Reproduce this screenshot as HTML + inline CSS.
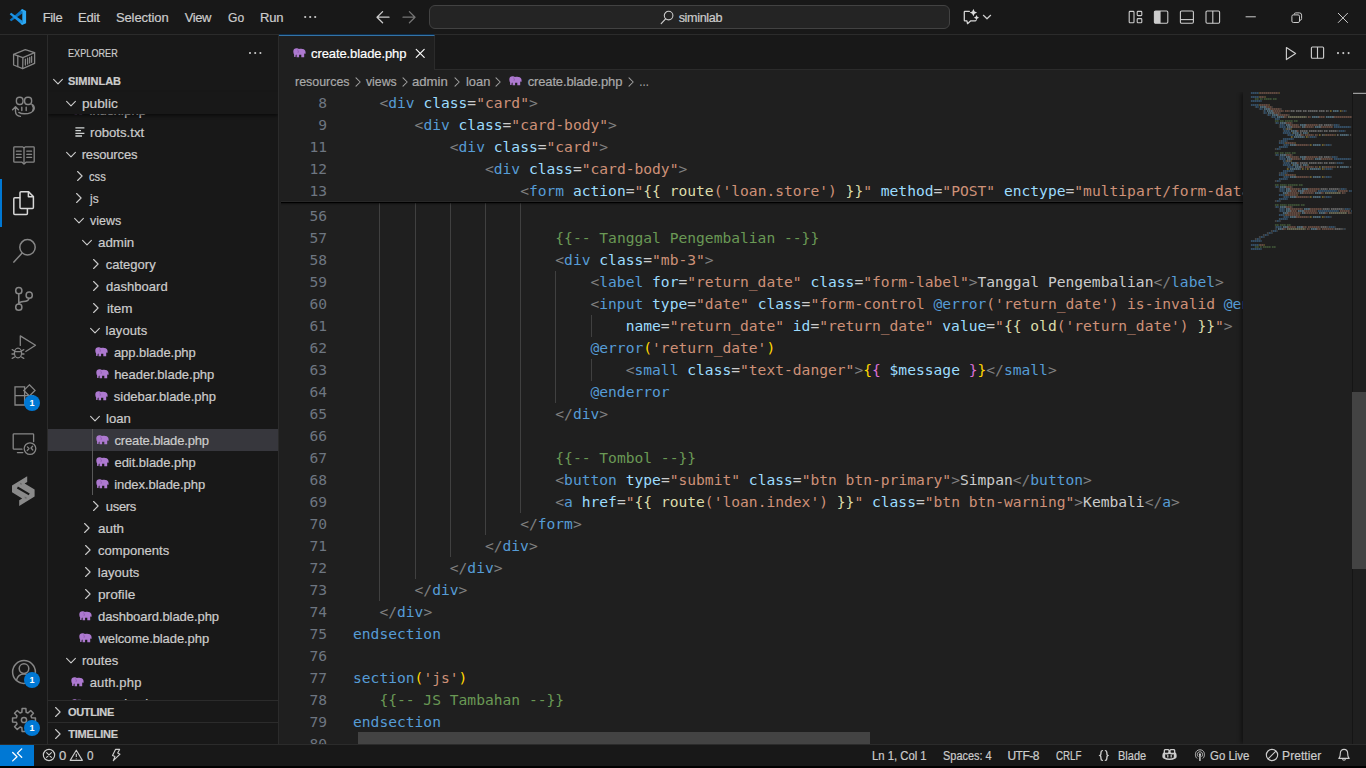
<!DOCTYPE html>
<html lang="en"><head><meta charset="utf-8"><title>create.blade.php - siminlab - Visual Studio Code</title>
<style>

*{box-sizing:border-box;margin:0;padding:0}
html,body{width:1366px;height:768px;overflow:hidden;background:#000}
body{font-family:"Liberation Sans",sans-serif;font-size:13px;color:#ccc;-webkit-text-stroke:.2px currentColor}
#app{position:relative;width:1366px;height:768px;overflow:hidden;background:#181818}
.abs{position:absolute}
.fit{transform-origin:0 50%;white-space:nowrap}
svg{display:block}
/* title bar */
#title{position:absolute;left:0;top:0;width:1366px;height:35px;background:#181818;border-bottom:1px solid #2b2b2b}
#title .menu{position:absolute;top:1px;height:34px;line-height:34px;font-size:13px;color:#ccc;white-space:nowrap}
#cc{position:absolute;left:429px;top:5px;width:521px;height:24px;border:1px solid #424242;border-radius:6px;background:#242424}
#cc span{position:absolute;left:249px;top:1.2px;line-height:22px;font-size:12.6px;color:#ccc}
/* activity */
#act{position:absolute;left:0;top:35px;width:48px;height:709px;background:#181818;border-right:1px solid #2b2b2b}
#act .ico{position:absolute;left:12px;width:24px;height:24px}
#act .bar{position:absolute;left:0;top:144px;width:2px;height:48px;background:#0078d4}
.badge{-webkit-text-stroke:0;position:absolute;width:16px;height:16px;border-radius:8px;background:#0078d4;color:#fff;font-size:9px;font-weight:bold;line-height:16px;text-align:center}
/* sidebar */
#side{position:absolute;left:48px;top:35px;width:231px;height:709px;background:#181818;border-right:1px solid #2b2b2b;overflow:hidden}
#side .hdr{position:absolute;left:20px;top:1px;line-height:35px;font-size:11px;color:#ccc;letter-spacing:.1px}
.row{position:absolute;left:0;width:230px;height:22px;line-height:22px;white-space:nowrap;color:#ccc;font-size:13px}
.row .lbl{position:absolute;top:1px}
.row svg{position:absolute}
.row.sel{background:#37373d}
.sec{position:absolute;left:0;width:230px;height:22px;line-height:22px;font-size:11px;font-weight:bold;color:#ccc}
.sec span{position:absolute;left:20px;top:0}
/* tabs */
#tabs{position:absolute;left:279px;top:35px;width:1087px;height:35px;background:#181818;border-bottom:1px solid #2b2b2b}
#tab{position:absolute;left:0;top:0;width:156px;height:35px;background:#1f1f1f;border-top:1px solid #3473a6;border-right:1px solid #2b2b2b}
#tab span{position:absolute;left:32px;top:1px;line-height:34px;font-size:13px;color:#fff}
#bc{position:absolute;left:279px;top:70px;width:1087px;height:22px;background:#1f1f1f;font-size:13px;color:#a9a9a9;line-height:22px;white-space:nowrap}
#bc span{position:absolute;top:1px}
/* editor */
#ed{position:absolute;left:279px;top:92px;width:1087px;height:652px;background:#1f1f1f;overflow:hidden}
.ln{position:absolute;left:0;width:48px;text-align:right;color:#6e7681;height:22px}
.mono{-webkit-text-stroke:0;font-family:"DejaVu Sans Mono",monospace;font-size:14.62px;line-height:22px;white-space:pre}
#codeclip{position:absolute;left:74px;top:0;width:890px;height:652px;overflow:hidden}
.cl{position:absolute;left:-8.8px;height:22px;color:#ccc}
.g{position:absolute;width:1px;background:#404040}
#sticky{position:absolute;left:0;top:0;width:964px;height:110px;background:#1f1f1f;overflow:hidden}
#stsh{position:absolute;left:2px;top:110px;width:962px;height:4px;background:linear-gradient(#000 0,#000 1px,rgba(0,0,0,.5) 1px,rgba(0,0,0,.22) 2px,rgba(0,0,0,.07) 3px,rgba(0,0,0,0) 4px)}
#stbd{position:absolute;left:2px;top:109px;width:962px;height:1px;background:#282828}
.t{color:#808080}.n{color:#569cd6}.a{color:#9cdcfe}.s{color:#ce9178}.c{color:#6a9955}.f{color:#dcdcaa}.y{color:#ffd700}.p{color:#da70d6}.w{color:#ccc}
/* status */
#status{position:absolute;left:0;top:744px;width:1366px;height:22px;background:#181818;border-top:1px solid #2b2b2b;font-size:12px;color:#ccc}
#status span{position:absolute;top:1px;line-height:21px;white-space:nowrap}
#remote{position:absolute;left:0;top:0;width:34px;height:21px;background:#0078d4}

</style></head>
<body>
<div id="app">
<div id="title"><svg class="abs" style="left:8px;top:7px" width="20" height="20" viewBox="8 7 20 20"><path fill="#0a74c2" d="M9.7 19.7 L22.3 9 V13.4 L11.2 21.3 Z"/><path fill="#1c94e6" d="M11.2 12.7 L22.3 20.7 V25.1 L9.7 14.3 Z"/><path fill="#2ba8f4" d="M22.1 9 L26.1 10.9 V23.2 L22.1 25.1 L20.6 23.6 L22.3 22.4 V11.6 L20.6 10.5 Z"/></svg><span class="menu fit" id="f0" style="left:42.64px;letter-spacing:-0.296px;">File</span><span class="menu fit" id="f1" style="left:78.04px;letter-spacing:-0.210px;">Edit</span><span class="menu fit" id="f2" style="left:115.93px;letter-spacing:-0.099px;">Selection</span><span class="menu fit" id="f3" style="left:184.71px;letter-spacing:-0.379px;">View</span><span class="menu fit" id="f4" style="left:228.22px;transform:scaleX(0.9281);">Go</span><span class="menu fit" id="f5" style="left:260.06px;letter-spacing:-0.263px;">Run</span><svg class="abs" style="left:303px;top:14px" width="15" height="6" viewBox="0 0 15 6" fill="none" ><circle cx="2.2" cy="3" r="1.1" fill="#ccc"/><circle cx="7.2" cy="3" r="1.1" fill="#ccc"/><circle cx="12.2" cy="3" r="1.1" fill="#ccc"/></svg><svg class="abs" style="left:375px;top:10px" width="16" height="14" viewBox="0 0 16 14" fill="none" ><path d="M7.6 1.6 L2 7.2 L7.6 12.8 M2.2 7.2 H14" stroke="#ccc" stroke-width="1.25" stroke-linecap="round" stroke-linejoin="round"/></svg><svg class="abs" style="left:400.5px;top:10px" width="16" height="14" viewBox="0 0 16 14" fill="none" ><path d="M8.4 1.6 L14 7.2 L8.4 12.8 M13.8 7.2 H2" stroke="#757575" stroke-width="1.25" stroke-linecap="round" stroke-linejoin="round"/></svg><div id="cc"><svg class="abs" style="left:230px;top:4px" width="14" height="15" viewBox="0 0 14 15" fill="none" ><circle cx="8.6" cy="5.6" r="4.3" stroke="#ccc" stroke-width="1.1"/><path d="M5.6 8.8 L1.2 13.6" stroke="#ccc" stroke-width="1.2" stroke-linecap="round"/></svg><span class="fit" id="f6" style="left:248.63px;letter-spacing:-0.331px;">siminlab</span></div><svg class="abs" style="left:963px;top:9px" width="18" height="17" viewBox="0 0 18 17" fill="none" ><path d="M6.4 2.3 H1.9 Q1.3 2.3 1.3 2.9 V11.2 Q1.3 11.8 1.9 11.8 H3.9 L4.5 14.7 L7.8 11.8 H12.4 Q13 11.8 13 11.3" stroke="#d6d6d6" stroke-width="1.25" stroke-linejoin="round" stroke-linecap="round"/><path fill="#dcdcdc" d="M10.4 -.1 L11.6 2.4 L14.1 3.6 L11.6 4.8 L10.4 7.3 L9.2 4.8 L6.7 3.6 L9.2 2.4 Z"/><path fill="#dcdcdc" d="M13.5 6.1 L14.4 7.8 L16.1 8.7 L14.4 9.6 L13.5 11.3 L12.6 9.6 L10.9 8.7 L12.6 7.8 Z"/></svg><svg class="abs" style="left:982px;top:13px" width="11" height="8" viewBox="0 0 11 8" fill="none" ><path d="M1.4 2.3 L5 5.8 L8.6 2.3" stroke="#d0d0d0" stroke-width="1.2" stroke-linecap="round" stroke-linejoin="round"/></svg><svg class="abs" style="left:1127px;top:9px" width="18" height="16" viewBox="0 0 18 16" fill="none" ><rect stroke="#ccc" stroke-width="1.1" stroke-linejoin="round" x="2.2" y="2.4" width="4.8" height="11.4" rx=".8"/><rect stroke="#ccc" stroke-width="1.1" stroke-linejoin="round" x="10.2" y="2.4" width="4.6" height="4.2" rx=".8"/><rect stroke="#ccc" stroke-width="1.1" stroke-linejoin="round" x="10.2" y="9.6" width="4.6" height="4.2" rx=".8"/></svg><svg class="abs" style="left:1152px;top:9px" width="18" height="16" viewBox="0 0 18 16" fill="none" ><rect stroke="#ccc" stroke-width="1.1" stroke-linejoin="round" x="2.4" y="2" width="13.4" height="12.2" rx="1.2"/><path d="M2.4 3 Q2.4 2 3.4 2 H8.6 V14.2 H3.4 Q2.4 14.2 2.4 13.2 Z" fill="#ccc"/></svg><svg class="abs" style="left:1178px;top:9px" width="18" height="16" viewBox="0 0 18 16" fill="none" ><rect stroke="#ccc" stroke-width="1.1" stroke-linejoin="round" x="2.4" y="2" width="13" height="12.2" rx="1.2"/><path stroke="#ccc" stroke-width="1.1" stroke-linejoin="round" d="M2.4 10.6 H15.4"/></svg><svg class="abs" style="left:1203px;top:9px" width="19" height="16" viewBox="0 0 19 16" fill="none" ><rect stroke="#ccc" stroke-width="1.1" stroke-linejoin="round" x="3" y="2" width="13.6" height="12.2" rx="1.2"/><path stroke="#ccc" stroke-width="1.1" stroke-linejoin="round" d="M9.8 2 V14.2"/></svg><svg class="abs" style="left:1245px;top:16px" width="12" height="2" viewBox="0 0 12 2" fill="none" ><path d="M0.6 0.8 H10.8" stroke="#ccc" stroke-width="1"/></svg><svg class="abs" style="left:1291px;top:11.5px" width="12" height="12" viewBox="0 0 12 12" fill="none" ><rect x="0.9" y="2.9" width="7.6" height="7.6" rx="1.4" stroke="#ccc" stroke-width="1"/><path d="M3 2.6 Q3.2 0.9 4.8 0.9 H8.4 Q10.6 0.9 10.6 3.1 V6.6 Q10.6 8.2 8.9 8.4" stroke="#ccc" stroke-width="1"/></svg><svg class="abs" style="left:1337px;top:11.5px" width="12" height="12" viewBox="0 0 12 12" fill="none" ><path d="M1 1 L10.8 10.8 M10.8 1 L1 10.8" stroke="#ccc" stroke-width="1"/></svg></div>
<div id="act"></div><div class="abs" style="left:0;top:179px;width:2px;height:48px;background:#0078d4"></div><svg class="abs" style="left:6px;top:42px" width="36" height="36" viewBox="0 0 36 36" fill="none" ><path stroke="#868686" stroke-width="1.3" stroke-linejoin="round" stroke-linecap="round" d="M7.6 12.3 L19.3 7.6 L28.6 10.6 L16.9 15.6 Z"/><path stroke="#868686" stroke-width="1.3" stroke-linejoin="round" stroke-linecap="round" d="M7.6 12.3 V23 L16.7 26.6 L28.6 21.4 V10.6"/><path stroke="#868686" stroke-width="1.3" stroke-linejoin="round" stroke-linecap="round" d="M16.9 15.6 L16.7 26.6"/><path stroke="#868686" stroke-width="1.3" stroke-linejoin="round" stroke-linecap="round" d="M11.8 14 V24.5"/><path stroke="#868686" stroke-width="1.3" stroke-linejoin="round" stroke-linecap="round" stroke-width="1.1" d="M19.4 17.2 V23 M21.6 16.2 V22 M23.7 15.3 V21.1 M25.6 14.4 V20.3"/></svg><svg class="abs" style="left:6px;top:86px" width="36" height="36" viewBox="0 0 36 36" fill="none" ><rect stroke="#868686" stroke-width="1.4" stroke-linejoin="round" stroke-linecap="round" stroke-width="1.8" x="10.4" y="11.3" width="6.6" height="7.2" rx="3"/><rect stroke="#868686" stroke-width="1.4" stroke-linejoin="round" stroke-linecap="round" stroke-width="1.8" x="18.6" y="11.3" width="7" height="7.2" rx="3"/><path stroke="#868686" stroke-width="1.4" stroke-linejoin="round" stroke-linecap="round" stroke-width="1.5" d="M25.8 18.4 C27.6 19 28.4 21 28.2 23 C27.8 26 23 27.8 18.5 27.8 C16 27.8 14 27.2 12.8 26.4"/><path stroke="#868686" stroke-width="1.4" stroke-linejoin="round" stroke-linecap="round" stroke-width="1.6" d="M26.4 19.6 C27.6 21 27.6 23.4 26.6 24.8"/><path stroke="#868686" stroke-width="1.4" stroke-linejoin="round" stroke-linecap="round" stroke-width="1.9" stroke-linecap="butt" d="M15.8 21.2 V24.6 M20.2 21.2 V24.6"/><path stroke="#868686" stroke-width="1.4" stroke-linejoin="round" stroke-linecap="round" d="M6.6 23.8 L9.5 20.8 L12.4 23.8 M9.5 21 V25.5 C9.6 28 11.5 30 14.4 30.4"/></svg><svg class="abs" style="left:6px;top:137px" width="36" height="36" viewBox="0 0 36 36" fill="none" ><path stroke="#868686" stroke-width="1.3" stroke-linejoin="round" stroke-linecap="round" d="M16.4 9.8 H8.6 Q7.8 9.8 7.8 10.6 V24.4 Q7.8 25.2 8.6 25.2 H16 L18 27 L20 25.2 H27.4 Q28.2 25.2 28.2 24.4 V10.6 Q28.2 9.8 27.4 9.8 H19.6 L18 10.8 Z"/><path stroke="#868686" stroke-width="1.3" stroke-linejoin="round" stroke-linecap="round" d="M18 10.8 V26.6"/><path stroke="#868686" stroke-width="1.3" stroke-linejoin="round" stroke-linecap="round" stroke-width="1.2" d="M10.4 14.2 H15.2 M10.4 17.3 H15.2 M10.4 20.4 H15.2 M20.8 14.2 H25.6 M20.8 17.3 H25.6 M20.8 20.4 H25.6"/></svg><svg class="abs" style="left:0px;top:178px" width="48" height="48" viewBox="0 0 48 48" fill="none" ><path stroke="#d7d7d7" stroke-width="1.5" stroke-linejoin="round" stroke-linecap="round" d="M21 13.8 H28.6 L33.4 18.6 V29.4 Q33.4 30.4 32.4 30.4 H21 Q20 30.4 20 29.4 V14.8 Q20 13.8 21 13.8 Z"/><path stroke="#d7d7d7" stroke-width="1.5" stroke-linejoin="round" stroke-linecap="round" stroke-width="1.2" d="M28.4 14 V18.8 H33.2"/><path stroke="#d7d7d7" stroke-width="1.5" stroke-linejoin="round" stroke-linecap="round" d="M19.6 19.8 H14.8 Q13.8 19.8 13.8 20.8 V35.4 Q13.8 36.4 14.8 36.4 H26.4 Q27.4 36.4 27.4 35.4 V30.8"/></svg><svg class="abs" style="left:0px;top:226px" width="48" height="48" viewBox="0 0 48 48" fill="none" ><circle stroke="#868686" stroke-width="1.5" stroke-linecap="round" cx="27.5" cy="21.3" r="7.7"/><path stroke="#868686" stroke-width="1.5" stroke-linecap="round" d="M21.9 27.3 L13.9 36.1"/></svg><svg class="abs" style="left:0px;top:274px" width="48" height="48" viewBox="0 0 48 48" fill="none" ><circle stroke="#868686" stroke-width="1.5" stroke-linecap="round" cx="18.8" cy="16.7" r="3.1"/><circle stroke="#868686" stroke-width="1.5" stroke-linecap="round" cx="18.8" cy="33.2" r="3.1"/><circle stroke="#868686" stroke-width="1.5" stroke-linecap="round" cx="29.2" cy="21.2" r="3.1"/><path stroke="#868686" stroke-width="1.5" stroke-linecap="round" d="M18.8 19.9 V30 M29 24.4 C28.6 27 26 27.4 23.5 27.4 C21 27.4 19.4 28.2 18.9 29.6"/></svg><svg class="abs" style="left:0px;top:322px" width="48" height="48" viewBox="0 0 48 48" fill="none" ><path stroke="#868686" stroke-width="1.3" stroke-linecap="round" stroke-linejoin="round" d="M20.3 23.4 V13.9 L35.5 23.2 L25.8 29.5"/><ellipse stroke="#868686" stroke-width="1.3" stroke-linecap="round" stroke-linejoin="round" cx="18" cy="31" rx="3.6" ry="4.9"/><path stroke="#868686" stroke-width="1.3" stroke-linecap="round" stroke-linejoin="round" d="M14.6 29.6 H21.4 M12.2 27.6 L14.6 29 M12 32 H14.4 M12.2 36.4 L14.6 35 M23.8 27.6 L21.4 29 M24 32 H21.6 M23.8 36.4 L21.4 35"/></svg><svg class="abs" style="left:0px;top:370px" width="48" height="48" viewBox="0 0 48 48" fill="none" ><path stroke="#868686" stroke-width="1.3" stroke-linejoin="miter" d="M15 16.8 H24.6 V35 H15 Z M15 25.6 H24.6 M24.6 25.6 H33.4 V35 H24.6"/><path stroke="#868686" stroke-width="1.3" stroke-linejoin="miter" d="M29.4 14.8 L35 20.4 L29.4 26 L23.8 20.4 Z"/></svg><svg class="abs" style="left:0px;top:418px" width="48" height="48" viewBox="0 0 48 48" fill="none" ><path stroke="#868686" stroke-width="1.3" stroke-linejoin="round" stroke-linecap="round" d="M33.6 23.6 V16.6 Q33.6 15.8 32.8 15.8 H14 Q13.2 15.8 13.2 16.6 V30.4 Q13.2 31.2 14 31.2 H22"/><path stroke="#868686" stroke-width="1.3" stroke-linejoin="round" stroke-linecap="round" d="M17.4 34.6 H22.8"/><circle stroke="#868686" stroke-width="1.3" stroke-linejoin="round" stroke-linecap="round" cx="30" cy="30.6" r="5.8"/><path stroke="#868686" stroke-width="1.3" stroke-linejoin="round" stroke-linecap="round" stroke-width="1" d="M27.4 28.9 L29 30.5 L27.2 32.6 M32.6 28.3 L31 30 L32.8 32"/></svg><svg class="abs" style="left:0px;top:466px" width="48" height="48" viewBox="0 0 48 48" fill="none" ><path fill="#8a8a8a" d="M27.2 10.2 V16 L24.6 17.6 L34.6 23.6 V30.6 L19.2 39.9 V34.2 L22.2 32.4 L12 26.2 V19.4 Z"/><path stroke="#181818" stroke-width="2.1" d="M17.4 21.5 L29.2 28.3"/><path fill="#6c6c6c" d="M20 16.8 L21.9 17.4 L21.9 18.8 L20 18.2 Z M24.7 30.6 L26.6 31.2 L26.6 32.8 L24.7 32.2 Z"/></svg><svg class="abs" style="left:0px;top:648px" width="48" height="48" viewBox="0 0 48 48" fill="none" ><circle stroke="#868686" stroke-width="1.5" stroke-linecap="round" cx="24" cy="24" r="11.4"/><circle stroke="#868686" stroke-width="1.5" stroke-linecap="round" cx="24" cy="20.6" r="4.8"/><path stroke="#868686" stroke-width="1.5" stroke-linecap="round" d="M16.4 32.4 C17.4 28.4 20.4 26 24 26 C27.6 26 30.6 28.4 31.6 32.4"/></svg><svg class="abs" style="left:0px;top:696px" width="48" height="48" viewBox="0 0 48 48" fill="none" ><path stroke="#868686" stroke-width="1.5" stroke-linejoin="round" d="M21.87 16.29 L22.09 12.56 L25.91 12.56 L26.13 16.29 L27.94 17.04 L30.74 14.56 L33.44 17.26 L30.96 20.06 L31.71 21.87 L35.44 22.09 L35.44 25.91 L31.71 26.13 L30.96 27.94 L33.44 30.74 L30.74 33.44 L27.94 30.96 L26.13 31.71 L25.91 35.44 L22.09 35.44 L21.87 31.71 L20.06 30.96 L17.26 33.44 L14.56 30.74 L17.04 27.94 L16.29 26.13 L12.56 25.91 L12.56 22.09 L16.29 21.87 L17.04 20.06 L14.56 17.26 L17.26 14.56 L20.06 17.04 Z"/><circle stroke="#868686" stroke-width="1.5" stroke-linejoin="round" cx="24" cy="24" r="2.6"/></svg><div class="badge" style="left:24px;top:395px">1</div><div class="badge" style="left:24px;top:672px">1</div><div class="badge" style="left:24px;top:720px">1</div>
<div id="side"><span class="hdr fit" id="f7" style="left:20.15px;transform:scaleX(0.8207);">EXPLORER</span><svg class="abs" style="left:200px;top:15px" width="15" height="6" viewBox="0 0 15 6" fill="none" ><circle cx="2" cy="3" r="1.05" fill="#ccc"/><circle cx="7.2" cy="3" r="1.05" fill="#ccc"/><circle cx="12.4" cy="3" r="1.05" fill="#ccc"/></svg><div class="abs" style="left:0;top:79px;width:230px;height:586px;overflow:hidden"><div class="row" style="top:-15px"><svg class="abs" style="left:23.199999999999996px;top:6.4px" width="14" height="10" viewBox="0 0 14 10"><path fill="#ad79d0" d="M0.3 3.4 C0.3 1.4 1.6 0.2 3.4 0.2 C4.6 0.2 5.4 0.6 6 1 C7.4 0.5 9.4 0.5 10.8 1.2 C12.2 2 12.7 3.4 12.6 4.8 L12.6 5.9 L11.8 5.2 L11.2 6.2 V9.3 H8.3 V6.7 H6.1 V9.3 H3.6 V7 L3.1 6.6 L2.6 7.4 V8.4 C2.6 9.3 1.2 9.3 1.1 8.4 V6.4 C0.6 5.6 0.3 4.6 0.3 3.4 Z"/><path d="M4.4 1.8 C5.4 2.4 5.6 3.6 5 4.8" stroke="#8650a8" stroke-width=".7" fill="none"/></svg><span class="lbl fit" id="f8" style="left:41.50px;">index.php</span></div><div class="row" style="top:7px"><svg class="abs" style="left:27.399999999999995px;top:5.2px" width="11" height="11" viewBox="0 0 11 11" fill="none" ><path d="M0.4 1.9 H9.4 M0.4 4.6 H6 M0.4 7.3 H9.4 M0.4 10 H7" stroke="#d0d4d4" stroke-width="1.3"/></svg><span class="lbl fit" id="f9" style="left:42.41px;transform:scaleX(1.0128);">robots.txt</span></div><div class="row" style="top:29px"><svg class="abs" style="left:17.1px;top:7.9px" width="12" height="8" viewBox="0 0 12 8" fill="none" ><path d="M1.6 1.4 L6 5.9 L10.4 1.4" stroke="#ccc" stroke-width="1.1" stroke-linecap="round" stroke-linejoin="round"/></svg><span class="lbl fit" id="f10" style="left:33.65px;letter-spacing:-0.158px;">resources</span></div><div class="row" style="top:51px"><svg class="abs" style="left:27.499999999999993px;top:5.1px" width="8" height="12" viewBox="0 0 8 12" fill="none" ><path d="M1.6 1.5 L6.1 6 L1.6 10.5" stroke="#ccc" stroke-width="1.1" stroke-linecap="round" stroke-linejoin="round"/></svg><span class="lbl fit" id="f11" style="left:41.44px;transform:scaleX(0.8638);">css</span></div><div class="row" style="top:73px"><svg class="abs" style="left:26.999999999999993px;top:5.1px" width="8" height="12" viewBox="0 0 8 12" fill="none" ><path d="M1.6 1.5 L6.1 6 L1.6 10.5" stroke="#ccc" stroke-width="1.1" stroke-linecap="round" stroke-linejoin="round"/></svg><span class="lbl fit" id="f12" style="left:41.91px;transform:scaleX(0.9143);">js</span></div><div class="row" style="top:95px"><svg class="abs" style="left:24.999999999999993px;top:7.9px" width="12" height="8" viewBox="0 0 12 8" fill="none" ><path d="M1.6 1.4 L6 5.9 L10.4 1.4" stroke="#ccc" stroke-width="1.1" stroke-linecap="round" stroke-linejoin="round"/></svg><span class="lbl fit" id="f13" style="left:41.64px;transform:scaleX(0.9584);">views</span></div><div class="row" style="top:117px"><svg class="abs" style="left:32.800000000000004px;top:7.9px" width="12" height="8" viewBox="0 0 12 8" fill="none" ><path d="M1.6 1.4 L6 5.9 L10.4 1.4" stroke="#ccc" stroke-width="1.1" stroke-linecap="round" stroke-linejoin="round"/></svg><span class="lbl fit" id="f14" style="left:49.86px;transform:scaleX(1.0244);">admin</span></div><div class="row" style="top:139px"><svg class="abs" style="left:43.49999999999999px;top:5.1px" width="8" height="12" viewBox="0 0 8 12" fill="none" ><path d="M1.6 1.5 L6.1 6 L1.6 10.5" stroke="#ccc" stroke-width="1.1" stroke-linecap="round" stroke-linejoin="round"/></svg><span class="lbl fit" id="f15" style="left:57.70px;letter-spacing:0.023px;">category</span></div><div class="row" style="top:161px"><svg class="abs" style="left:43.49999999999999px;top:5.1px" width="8" height="12" viewBox="0 0 8 12" fill="none" ><path d="M1.6 1.5 L6.1 6 L1.6 10.5" stroke="#ccc" stroke-width="1.1" stroke-linecap="round" stroke-linejoin="round"/></svg><span class="lbl fit" id="f16" style="left:57.89px;letter-spacing:0.043px;">dashboard</span></div><div class="row" style="top:183px"><svg class="abs" style="left:43.9px;top:5.1px" width="8" height="12" viewBox="0 0 8 12" fill="none" ><path d="M1.6 1.5 L6.1 6 L1.6 10.5" stroke="#ccc" stroke-width="1.1" stroke-linecap="round" stroke-linejoin="round"/></svg><span class="lbl fit" id="f17" style="left:58.64px;transform:scaleX(1.0360);">item</span></div><div class="row" style="top:205px"><svg class="abs" style="left:40.99999999999999px;top:7.9px" width="12" height="8" viewBox="0 0 12 8" fill="none" ><path d="M1.6 1.4 L6 5.9 L10.4 1.4" stroke="#ccc" stroke-width="1.1" stroke-linecap="round" stroke-linejoin="round"/></svg><span class="lbl fit" id="f18" style="left:57.53px;letter-spacing:0.085px;">layouts</span></div><div class="row" style="top:227px"><svg class="abs" style="left:47.300000000000004px;top:6.4px" width="14" height="10" viewBox="0 0 14 10"><path fill="#ad79d0" d="M0.3 3.4 C0.3 1.4 1.6 0.2 3.4 0.2 C4.6 0.2 5.4 0.6 6 1 C7.4 0.5 9.4 0.5 10.8 1.2 C12.2 2 12.7 3.4 12.6 4.8 L12.6 5.9 L11.8 5.2 L11.2 6.2 V9.3 H8.3 V6.7 H6.1 V9.3 H3.6 V7 L3.1 6.6 L2.6 7.4 V8.4 C2.6 9.3 1.2 9.3 1.1 8.4 V6.4 C0.6 5.6 0.3 4.6 0.3 3.4 Z"/><path d="M4.4 1.8 C5.4 2.4 5.6 3.6 5 4.8" stroke="#8650a8" stroke-width=".7" fill="none"/></svg><span class="lbl fit" id="f19" style="left:65.93px;letter-spacing:-0.050px;">app.blade.php</span></div><div class="row" style="top:249px"><svg class="abs" style="left:47.50000000000001px;top:6.4px" width="14" height="10" viewBox="0 0 14 10"><path fill="#ad79d0" d="M0.3 3.4 C0.3 1.4 1.6 0.2 3.4 0.2 C4.6 0.2 5.4 0.6 6 1 C7.4 0.5 9.4 0.5 10.8 1.2 C12.2 2 12.7 3.4 12.6 4.8 L12.6 5.9 L11.8 5.2 L11.2 6.2 V9.3 H8.3 V6.7 H6.1 V9.3 H3.6 V7 L3.1 6.6 L2.6 7.4 V8.4 C2.6 9.3 1.2 9.3 1.1 8.4 V6.4 C0.6 5.6 0.3 4.6 0.3 3.4 Z"/><path d="M4.4 1.8 C5.4 2.4 5.6 3.6 5 4.8" stroke="#8650a8" stroke-width=".7" fill="none"/></svg><span class="lbl fit" id="f20" style="left:66.14px;letter-spacing:-0.021px;">header.blade.php</span></div><div class="row" style="top:271px"><svg class="abs" style="left:47.199999999999996px;top:6.4px" width="14" height="10" viewBox="0 0 14 10"><path fill="#ad79d0" d="M0.3 3.4 C0.3 1.4 1.6 0.2 3.4 0.2 C4.6 0.2 5.4 0.6 6 1 C7.4 0.5 9.4 0.5 10.8 1.2 C12.2 2 12.7 3.4 12.6 4.8 L12.6 5.9 L11.8 5.2 L11.2 6.2 V9.3 H8.3 V6.7 H6.1 V9.3 H3.6 V7 L3.1 6.6 L2.6 7.4 V8.4 C2.6 9.3 1.2 9.3 1.1 8.4 V6.4 C0.6 5.6 0.3 4.6 0.3 3.4 Z"/><path d="M4.4 1.8 C5.4 2.4 5.6 3.6 5 4.8" stroke="#8650a8" stroke-width=".7" fill="none"/></svg><span class="lbl fit" id="f21" style="left:65.81px;letter-spacing:-0.030px;">sidebar.blade.php</span></div><div class="row" style="top:293px"><svg class="abs" style="left:40.99999999999999px;top:7.9px" width="12" height="8" viewBox="0 0 12 8" fill="none" ><path d="M1.6 1.4 L6 5.9 L10.4 1.4" stroke="#ccc" stroke-width="1.1" stroke-linecap="round" stroke-linejoin="round"/></svg><span class="lbl fit" id="f22" style="left:57.66px;transform:scaleX(1.0091);">loan</span></div><div class="row sel" style="top:315px"><svg class="abs" style="left:47.50000000000001px;top:6.4px" width="14" height="10" viewBox="0 0 14 10"><path fill="#ad79d0" d="M0.3 3.4 C0.3 1.4 1.6 0.2 3.4 0.2 C4.6 0.2 5.4 0.6 6 1 C7.4 0.5 9.4 0.5 10.8 1.2 C12.2 2 12.7 3.4 12.6 4.8 L12.6 5.9 L11.8 5.2 L11.2 6.2 V9.3 H8.3 V6.7 H6.1 V9.3 H3.6 V7 L3.1 6.6 L2.6 7.4 V8.4 C2.6 9.3 1.2 9.3 1.1 8.4 V6.4 C0.6 5.6 0.3 4.6 0.3 3.4 Z"/><path d="M4.4 1.8 C5.4 2.4 5.6 3.6 5 4.8" stroke="#8650a8" stroke-width=".7" fill="none"/></svg><span class="lbl fit" id="f23" style="left:66.48px;letter-spacing:-0.150px;">create.blade.php</span></div><div class="row" style="top:337px"><svg class="abs" style="left:47.50000000000001px;top:6.4px" width="14" height="10" viewBox="0 0 14 10"><path fill="#ad79d0" d="M0.3 3.4 C0.3 1.4 1.6 0.2 3.4 0.2 C4.6 0.2 5.4 0.6 6 1 C7.4 0.5 9.4 0.5 10.8 1.2 C12.2 2 12.7 3.4 12.6 4.8 L12.6 5.9 L11.8 5.2 L11.2 6.2 V9.3 H8.3 V6.7 H6.1 V9.3 H3.6 V7 L3.1 6.6 L2.6 7.4 V8.4 C2.6 9.3 1.2 9.3 1.1 8.4 V6.4 C0.6 5.6 0.3 4.6 0.3 3.4 Z"/><path d="M4.4 1.8 C5.4 2.4 5.6 3.6 5 4.8" stroke="#8650a8" stroke-width=".7" fill="none"/></svg><span class="lbl fit" id="f24" style="left:66.46px;letter-spacing:-0.032px;">edit.blade.php</span></div><div class="row" style="top:359px"><svg class="abs" style="left:47.50000000000001px;top:6.4px" width="14" height="10" viewBox="0 0 14 10"><path fill="#ad79d0" d="M0.3 3.4 C0.3 1.4 1.6 0.2 3.4 0.2 C4.6 0.2 5.4 0.6 6 1 C7.4 0.5 9.4 0.5 10.8 1.2 C12.2 2 12.7 3.4 12.6 4.8 L12.6 5.9 L11.8 5.2 L11.2 6.2 V9.3 H8.3 V6.7 H6.1 V9.3 H3.6 V7 L3.1 6.6 L2.6 7.4 V8.4 C2.6 9.3 1.2 9.3 1.1 8.4 V6.4 C0.6 5.6 0.3 4.6 0.3 3.4 Z"/><path d="M4.4 1.8 C5.4 2.4 5.6 3.6 5 4.8" stroke="#8650a8" stroke-width=".7" fill="none"/></svg><span class="lbl fit" id="f25" style="left:66.21px;letter-spacing:-0.064px;">index.blade.php</span></div><div class="row" style="top:381px"><svg class="abs" style="left:43.9px;top:5.1px" width="8" height="12" viewBox="0 0 8 12" fill="none" ><path d="M1.6 1.5 L6.1 6 L1.6 10.5" stroke="#ccc" stroke-width="1.1" stroke-linecap="round" stroke-linejoin="round"/></svg><span class="lbl fit" id="f26" style="left:57.87px;letter-spacing:-0.351px;">users</span></div><div class="row" style="top:403px"><svg class="abs" style="left:35.300000000000004px;top:5.1px" width="8" height="12" viewBox="0 0 8 12" fill="none" ><path d="M1.6 1.5 L6.1 6 L1.6 10.5" stroke="#ccc" stroke-width="1.1" stroke-linecap="round" stroke-linejoin="round"/></svg><span class="lbl fit" id="f27" style="left:49.84px;transform:scaleX(1.0299);">auth</span></div><div class="row" style="top:425px"><svg class="abs" style="left:35.6px;top:5.1px" width="8" height="12" viewBox="0 0 8 12" fill="none" ><path d="M1.6 1.5 L6.1 6 L1.6 10.5" stroke="#ccc" stroke-width="1.1" stroke-linecap="round" stroke-linejoin="round"/></svg><span class="lbl fit" id="f28" style="left:49.97px;letter-spacing:0.053px;">components</span></div><div class="row" style="top:447px"><svg class="abs" style="left:35.6px;top:5.1px" width="8" height="12" viewBox="0 0 8 12" fill="none" ><path d="M1.6 1.5 L6.1 6 L1.6 10.5" stroke="#ccc" stroke-width="1.1" stroke-linecap="round" stroke-linejoin="round"/></svg><span class="lbl fit" id="f29" style="left:49.67px;letter-spacing:0.085px;">layouts</span></div><div class="row" style="top:469px"><svg class="abs" style="left:35.6px;top:5.1px" width="8" height="12" viewBox="0 0 8 12" fill="none" ><path d="M1.6 1.5 L6.1 6 L1.6 10.5" stroke="#ccc" stroke-width="1.1" stroke-linecap="round" stroke-linejoin="round"/></svg><span class="lbl fit" id="f30" style="left:50.14px;transform:scaleX(1.0539);">profile</span></div><div class="row" style="top:491px"><svg class="abs" style="left:31.300000000000004px;top:6.4px" width="14" height="10" viewBox="0 0 14 10"><path fill="#ad79d0" d="M0.3 3.4 C0.3 1.4 1.6 0.2 3.4 0.2 C4.6 0.2 5.4 0.6 6 1 C7.4 0.5 9.4 0.5 10.8 1.2 C12.2 2 12.7 3.4 12.6 4.8 L12.6 5.9 L11.8 5.2 L11.2 6.2 V9.3 H8.3 V6.7 H6.1 V9.3 H3.6 V7 L3.1 6.6 L2.6 7.4 V8.4 C2.6 9.3 1.2 9.3 1.1 8.4 V6.4 C0.6 5.6 0.3 4.6 0.3 3.4 Z"/><path d="M4.4 1.8 C5.4 2.4 5.6 3.6 5 4.8" stroke="#8650a8" stroke-width=".7" fill="none"/></svg><span class="lbl fit" id="f31" style="left:50.03px;letter-spacing:-0.064px;">dashboard.blade.php</span></div><div class="row" style="top:513px"><svg class="abs" style="left:31.300000000000004px;top:6.4px" width="14" height="10" viewBox="0 0 14 10"><path fill="#ad79d0" d="M0.3 3.4 C0.3 1.4 1.6 0.2 3.4 0.2 C4.6 0.2 5.4 0.6 6 1 C7.4 0.5 9.4 0.5 10.8 1.2 C12.2 2 12.7 3.4 12.6 4.8 L12.6 5.9 L11.8 5.2 L11.2 6.2 V9.3 H8.3 V6.7 H6.1 V9.3 H3.6 V7 L3.1 6.6 L2.6 7.4 V8.4 C2.6 9.3 1.2 9.3 1.1 8.4 V6.4 C0.6 5.6 0.3 4.6 0.3 3.4 Z"/><path d="M4.4 1.8 C5.4 2.4 5.6 3.6 5 4.8" stroke="#8650a8" stroke-width=".7" fill="none"/></svg><span class="lbl fit" id="f32" style="left:50.45px;letter-spacing:-0.084px;">welcome.blade.php</span></div><div class="row" style="top:535px"><svg class="abs" style="left:17.1px;top:7.9px" width="12" height="8" viewBox="0 0 12 8" fill="none" ><path d="M1.6 1.4 L6 5.9 L10.4 1.4" stroke="#ccc" stroke-width="1.1" stroke-linecap="round" stroke-linejoin="round"/></svg><span class="lbl fit" id="f33" style="left:34.25px;transform:scaleX(1.0028);">routes</span></div><div class="row" style="top:557px"><svg class="abs" style="left:23.199999999999996px;top:6.4px" width="14" height="10" viewBox="0 0 14 10"><path fill="#ad79d0" d="M0.3 3.4 C0.3 1.4 1.6 0.2 3.4 0.2 C4.6 0.2 5.4 0.6 6 1 C7.4 0.5 9.4 0.5 10.8 1.2 C12.2 2 12.7 3.4 12.6 4.8 L12.6 5.9 L11.8 5.2 L11.2 6.2 V9.3 H8.3 V6.7 H6.1 V9.3 H3.6 V7 L3.1 6.6 L2.6 7.4 V8.4 C2.6 9.3 1.2 9.3 1.1 8.4 V6.4 C0.6 5.6 0.3 4.6 0.3 3.4 Z"/><path d="M4.4 1.8 C5.4 2.4 5.6 3.6 5 4.8" stroke="#8650a8" stroke-width=".7" fill="none"/></svg><span class="lbl fit" id="f34" style="left:41.65px;letter-spacing:0.163px;">auth.php</span></div><div class="row" style="top:579px"><svg class="abs" style="left:23.199999999999996px;top:6.4px" width="14" height="10" viewBox="0 0 14 10"><path fill="#ad79d0" d="M0.3 3.4 C0.3 1.4 1.6 0.2 3.4 0.2 C4.6 0.2 5.4 0.6 6 1 C7.4 0.5 9.4 0.5 10.8 1.2 C12.2 2 12.7 3.4 12.6 4.8 L12.6 5.9 L11.8 5.2 L11.2 6.2 V9.3 H8.3 V6.7 H6.1 V9.3 H3.6 V7 L3.1 6.6 L2.6 7.4 V8.4 C2.6 9.3 1.2 9.3 1.1 8.4 V6.4 C0.6 5.6 0.3 4.6 0.3 3.4 Z"/><path d="M4.4 1.8 C5.4 2.4 5.6 3.6 5 4.8" stroke="#8650a8" stroke-width=".7" fill="none"/></svg><span class="lbl fit" id="f35" style="left:41.50px;top:-.4px">console.php</span></div><div class="abs" style="left:44px;top:315px;width:1px;height:66px;background:#585858"></div></div><div class="sec" style="top:35px"><svg class="abs" style="left:4.199999999999999px;top:7.6px" width="12" height="8" viewBox="0 0 12 8" fill="none" ><path d="M1.6 1.4 L6 5.9 L10.4 1.4" stroke="#ccc" stroke-width="1.1" stroke-linecap="round" stroke-linejoin="round"/></svg><span class="fit" id="f36" style="left:19.90px;letter-spacing:-0.006px;">SIMINLAB</span></div><div class="abs" style="left:0;top:57px;width:230px;height:22px;background:#181818;box-shadow:0 2px 3px rgba(0,0,0,.5)"><div class="row" style="top:0px"><svg class="abs" style="left:17.300000000000004px;top:7.9px" width="12" height="8" viewBox="0 0 12 8" fill="none" ><path d="M1.6 1.4 L6 5.9 L10.4 1.4" stroke="#ccc" stroke-width="1.1" stroke-linecap="round" stroke-linejoin="round"/></svg><span class="lbl fit" id="f37" style="left:34.12px;transform:scaleX(1.0536);">public</span></div></div><div class="sec" style="top:665px;border-top:1px solid #2b2b2b;background:#181818"><svg class="abs" style="left:6.4px;top:4.9px" width="8" height="12" viewBox="0 0 8 12" fill="none" ><path d="M1.6 1.5 L6.1 6 L1.6 10.5" stroke="#ccc" stroke-width="1.1" stroke-linecap="round" stroke-linejoin="round"/></svg><span class="fit" id="f38" style="left:19.91px;letter-spacing:-0.321px;top:0">OUTLINE</span></div><div class="sec" style="top:687px;border-top:1px solid #2b2b2b;background:#181818"><svg class="abs" style="left:6.4px;top:4.9px" width="8" height="12" viewBox="0 0 8 12" fill="none" ><path d="M1.6 1.5 L6.1 6 L1.6 10.5" stroke="#ccc" stroke-width="1.1" stroke-linecap="round" stroke-linejoin="round"/></svg><span class="fit" id="f39" style="left:20.28px;letter-spacing:-0.220px;top:0">TIMELINE</span></div></div>
<div class="abs" style="left:279px;top:34px;width:155px;height:1px;background:#0c2e4e"></div><div id="tabs"><div id="tab"><svg class="abs" style="left:13.8px;top:11.8px" width="14" height="10" viewBox="0 0 14 10"><path fill="#ad79d0" d="M0.3 3.4 C0.3 1.4 1.6 0.2 3.4 0.2 C4.6 0.2 5.4 0.6 6 1 C7.4 0.5 9.4 0.5 10.8 1.2 C12.2 2 12.7 3.4 12.6 4.8 L12.6 5.9 L11.8 5.2 L11.2 6.2 V9.3 H8.3 V6.7 H6.1 V9.3 H3.6 V7 L3.1 6.6 L2.6 7.4 V8.4 C2.6 9.3 1.2 9.3 1.1 8.4 V6.4 C0.6 5.6 0.3 4.6 0.3 3.4 Z"/><path d="M4.4 1.8 C5.4 2.4 5.6 3.6 5 4.8" stroke="#8650a8" stroke-width=".7" fill="none"/></svg><span class="fit" id="f40" style="left:32.09px;letter-spacing:-0.101px;">create.blade.php</span><svg class="abs" style="left:136.4px;top:12px" width="11" height="11" viewBox="0 0 11 11" fill="none" ><path d="M1.2 1.4 L9.2 9.4 M9.2 1.4 L1.2 9.4" stroke="#fff" stroke-width="1.15" stroke-linecap="round"/></svg></div><svg class="abs" style="left:1006px;top:11px" width="13" height="16" viewBox="0 0 13 16" fill="none" ><path d="M1.4 1.6 L10.6 7.6 L1.4 13.6 Z" stroke="#ccc" stroke-width="1.15" stroke-linejoin="round"/></svg><svg class="abs" style="left:1031px;top:11px" width="15" height="14" viewBox="0 0 15 14" fill="none" ><rect x="1.4" y="1" width="12.2" height="11.2" rx="1" stroke="#ccc" stroke-width="1.15"/><path d="M7.5 1 V12.2" stroke="#ccc" stroke-width="1.15"/></svg><svg class="abs" style="left:1056.5px;top:15px" width="15" height="6" viewBox="0 0 15 6" fill="none" ><circle cx="2" cy="3.1" r="1.05" fill="#ccc"/><circle cx="7.3" cy="3.1" r="1.05" fill="#ccc"/><circle cx="12.6" cy="3.1" r="1.05" fill="#ccc"/></svg></div><div id="bc"><span class="fit" id="f41" style="left:16.24px;transform:scaleX(0.9551);">resources</span><span class="fit" id="f42" style="left:87.49px;transform:scaleX(0.9418);">views</span><span class="fit" id="f43" style="left:133.29px;transform:scaleX(1.0099);">admin</span><span class="fit" id="f44" style="left:186.67px;transform:scaleX(0.9897);">loan</span><svg class="abs" style="left:76.19999999999999px;top:7px" width="7" height="10" viewBox="0 0 7 10" fill="none" ><path d="M1 0.8 L5.2 5 L1 9.2" stroke="#a0a0a0" stroke-width="1.05" stroke-linecap="round" stroke-linejoin="round"/></svg><svg class="abs" style="left:123.39999999999998px;top:7px" width="7" height="10" viewBox="0 0 7 10" fill="none" ><path d="M1 0.8 L5.2 5 L1 9.2" stroke="#a0a0a0" stroke-width="1.05" stroke-linecap="round" stroke-linejoin="round"/></svg><svg class="abs" style="left:175.2px;top:7px" width="7" height="10" viewBox="0 0 7 10" fill="none" ><path d="M1 0.8 L5.2 5 L1 9.2" stroke="#a0a0a0" stroke-width="1.05" stroke-linecap="round" stroke-linejoin="round"/></svg><svg class="abs" style="left:216.39999999999998px;top:7px" width="7" height="10" viewBox="0 0 7 10" fill="none" ><path d="M1 0.8 L5.2 5 L1 9.2" stroke="#a0a0a0" stroke-width="1.05" stroke-linecap="round" stroke-linejoin="round"/></svg><svg class="abs" style="left:349.4px;top:7px" width="7" height="10" viewBox="0 0 7 10" fill="none" ><path d="M1 0.8 L5.2 5 L1 9.2" stroke="#a0a0a0" stroke-width="1.05" stroke-linecap="round" stroke-linejoin="round"/></svg><svg class="abs" style="left:229.8px;top:6px" width="14" height="10" viewBox="0 0 14 10"><path fill="#ad79d0" d="M0.3 3.4 C0.3 1.4 1.6 0.2 3.4 0.2 C4.6 0.2 5.4 0.6 6 1 C7.4 0.5 9.4 0.5 10.8 1.2 C12.2 2 12.7 3.4 12.6 4.8 L12.6 5.9 L11.8 5.2 L11.2 6.2 V9.3 H8.3 V6.7 H6.1 V9.3 H3.6 V7 L3.1 6.6 L2.6 7.4 V8.4 C2.6 9.3 1.2 9.3 1.1 8.4 V6.4 C0.6 5.6 0.3 4.6 0.3 3.4 Z"/><path d="M4.4 1.8 C5.4 2.4 5.6 3.6 5 4.8" stroke="#8650a8" stroke-width=".7" fill="none"/></svg><span class="fit" id="f45" style="left:248.70px;letter-spacing:-0.144px;">create.blade.php</span><span style="left:360.0px;transform:scaleX(.78);transform-origin:0 50%">…</span></div>
<div id="ed"><div class="ln mono" style="top:91px">55</div><div class="ln mono" style="top:113px">56</div><div class="ln mono" style="top:135px">57</div><div class="ln mono" style="top:157px">58</div><div class="ln mono" style="top:179px">59</div><div class="ln mono" style="top:201px">60</div><div class="ln mono" style="top:223px">61</div><div class="ln mono" style="top:245px">62</div><div class="ln mono" style="top:267px">63</div><div class="ln mono" style="top:289px">64</div><div class="ln mono" style="top:311px">65</div><div class="ln mono" style="top:333px">66</div><div class="ln mono" style="top:355px">67</div><div class="ln mono" style="top:377px">68</div><div class="ln mono" style="top:399px">69</div><div class="ln mono" style="top:421px">70</div><div class="ln mono" style="top:443px">71</div><div class="ln mono" style="top:465px">72</div><div class="ln mono" style="top:487px">73</div><div class="ln mono" style="top:509px">74</div><div class="ln mono" style="top:531px">75</div><div class="ln mono" style="top:553px">76</div><div class="ln mono" style="top:575px">77</div><div class="ln mono" style="top:597px">78</div><div class="ln mono" style="top:619px">79</div><div class="ln mono" style="top:641px">80</div><div id="codeclip"><div class="g" style="left:26.4px;top:91px;height:418px"></div><div class="g" style="left:61.6px;top:91px;height:396px"></div><div class="g" style="left:96.8px;top:91px;height:374px"></div><div class="g" style="left:132.0px;top:91px;height:352px"></div><div class="g" style="left:167.2px;top:91px;height:330px"></div><div class="g" style="left:202.4px;top:179px;height:132px"></div><div class="g" style="left:237.6px;top:223px;height:22px"></div><div class="g" style="left:237.6px;top:267px;height:22px"></div><div class="cl mono" style="top:91px">                        <span class="t">&lt;/</span><span class="n">div</span><span class="t">&gt;</span></div><div class="cl mono" style="top:135px">                        <span class="c">{{-- Tanggal Pengembalian --}}</span></div><div class="cl mono" style="top:157px">                        <span class="t">&lt;</span><span class="n">div</span> <span class="a">class</span><span class="w">=</span><span class="s">"mb-3"</span><span class="t">&gt;</span></div><div class="cl mono" style="top:179px">                            <span class="t">&lt;</span><span class="n">label</span> <span class="a">for</span><span class="w">=</span><span class="s">"return_date"</span> <span class="a">class</span><span class="w">=</span><span class="s">"form-label"</span><span class="t">&gt;</span><span class="w">Tanggal Pengembalian</span><span class="t">&lt;/</span><span class="n">label</span><span class="t">&gt;</span></div><div class="cl mono" style="top:201px">                            <span class="t">&lt;</span><span class="n">input</span> <span class="a">type</span><span class="w">=</span><span class="s">"date"</span> <span class="a">class</span><span class="w">=</span><span class="s">"form-control </span><span class="n">@error</span><span class="s">('return_date') is-invalid </span><span class="n">@enderror</span><span class="s">"</span></div><div class="cl mono" style="top:223px">                                <span class="a">name</span><span class="w">=</span><span class="s">"return_date"</span> <span class="a">id</span><span class="w">=</span><span class="s">"return_date"</span> <span class="a">value</span><span class="w">=</span><span class="s">"</span><span class="f">{{</span><span class="s"> </span><span class="f">old</span><span class="s">('return_date') </span><span class="f">}}</span><span class="s">"</span><span class="t">&gt;</span></div><div class="cl mono" style="top:245px">                            <span class="n">@error</span><span class="y">(</span><span class="s">'return_date'</span><span class="y">)</span></div><div class="cl mono" style="top:267px">                                <span class="t">&lt;</span><span class="n">small</span> <span class="a">class</span><span class="w">=</span><span class="s">"text-danger"</span><span class="t">&gt;</span><span class="y">{</span><span class="p">{</span> <span class="a">$message</span> <span class="p">}</span><span class="y">}</span><span class="t">&lt;/</span><span class="n">small</span><span class="t">&gt;</span></div><div class="cl mono" style="top:289px">                            <span class="n">@enderror</span></div><div class="cl mono" style="top:311px">                        <span class="t">&lt;/</span><span class="n">div</span><span class="t">&gt;</span></div><div class="cl mono" style="top:355px">                        <span class="c">{{-- Tombol --}}</span></div><div class="cl mono" style="top:377px">                        <span class="t">&lt;</span><span class="n">button</span> <span class="a">type</span><span class="w">=</span><span class="s">"submit"</span> <span class="a">class</span><span class="w">=</span><span class="s">"btn btn-primary"</span><span class="t">&gt;</span><span class="w">Simpan</span><span class="t">&lt;/</span><span class="n">button</span><span class="t">&gt;</span></div><div class="cl mono" style="top:399px">                        <span class="t">&lt;</span><span class="n">a</span> <span class="a">href</span><span class="w">=</span><span class="s">"</span><span class="f">{{</span><span class="s"> </span><span class="f">route</span><span class="s">('loan.index') </span><span class="f">}}</span><span class="s">"</span> <span class="a">class</span><span class="w">=</span><span class="s">"btn btn-warning"</span><span class="t">&gt;</span><span class="w">Kembali</span><span class="t">&lt;/</span><span class="n">a</span><span class="t">&gt;</span></div><div class="cl mono" style="top:421px">                    <span class="t">&lt;/</span><span class="n">form</span><span class="t">&gt;</span></div><div class="cl mono" style="top:443px">                <span class="t">&lt;/</span><span class="n">div</span><span class="t">&gt;</span></div><div class="cl mono" style="top:465px">            <span class="t">&lt;/</span><span class="n">div</span><span class="t">&gt;</span></div><div class="cl mono" style="top:487px">        <span class="t">&lt;/</span><span class="n">div</span><span class="t">&gt;</span></div><div class="cl mono" style="top:509px">    <span class="t">&lt;/</span><span class="n">div</span><span class="t">&gt;</span></div><div class="cl mono" style="top:531px"><span class="n">@endsection</span></div><div class="cl mono" style="top:575px"><span class="n">@section</span><span class="y">(</span><span class="s">'js'</span><span class="y">)</span></div><div class="cl mono" style="top:597px">    <span class="c">{{-- JS Tambahan --}}</span></div><div class="cl mono" style="top:619px"><span class="n">@endsection</span></div></div><div class="abs" style="left:79px;top:640px;width:512px;height:12px;background:#434343"></div><div id="sticky"><div class="ln mono" style="top:0px">8</div><div class="ln mono" style="top:22px">9</div><div class="ln mono" style="top:44px">11</div><div class="ln mono" style="top:66px">12</div><div class="ln mono" style="top:88px">13</div><div class="abs" style="left:74px;top:0;width:890px;height:110px;overflow:hidden"><div class="cl mono" style="top:0px">    <span class="t">&lt;</span><span class="n">div</span> <span class="a">class</span><span class="w">=</span><span class="s">"card"</span><span class="t">&gt;</span></div><div class="cl mono" style="top:22px">        <span class="t">&lt;</span><span class="n">div</span> <span class="a">class</span><span class="w">=</span><span class="s">"card-body"</span><span class="t">&gt;</span></div><div class="cl mono" style="top:44px">            <span class="t">&lt;</span><span class="n">div</span> <span class="a">class</span><span class="w">=</span><span class="s">"card"</span><span class="t">&gt;</span></div><div class="cl mono" style="top:66px">                <span class="t">&lt;</span><span class="n">div</span> <span class="a">class</span><span class="w">=</span><span class="s">"card-body"</span><span class="t">&gt;</span></div><div class="cl mono" style="top:88px">                    <span class="t">&lt;</span><span class="n">form</span> <span class="a">action</span><span class="w">=</span><span class="s">"</span><span class="f">{{</span><span class="s"> </span><span class="f">route</span><span class="s">('loan.store') </span><span class="f">}}</span><span class="s">"</span> <span class="a">method</span><span class="w">=</span><span class="s">"POST"</span> <span class="a">enctype</span><span class="w">=</span><span class="s">"multipart/form-data"</span><span class="t">&gt;</span></div></div><div id="stbd"></div></div><div id="stsh"></div><div class="abs" style="left:964px;top:0;width:109px;height:652px;background:#1f1f1f;box-shadow:-3px 0 4px -1px rgba(0,0,0,.45)"></div><div class="abs" style="left:1073px;top:0;width:1px;height:652px;background:#151515"></div><div class="abs" style="left:1074px;top:0;width:13px;height:2px;background:linear-gradient(#3c3c3c 0,#3c3c3c 1px,#9c9c9c 1px)"></div><div class="abs" style="left:1073px;top:300px;width:14px;height:177px;background:#434343"></div></div>
<svg class="abs" style="left:1243px;top:92px" width="109" height="162" viewBox="0 0 109 162" fill="none" stroke-width="1.3" stroke-dasharray="1.7 .3" opacity=".5"><path stroke="#569cd6" d="M7.9 1h7.75M7.9 5h7.75M7.9 9h10.75M7.9 13h7.75M12.9 15h2.75M16.9 17h2.75M20.9 19h1.75M100.9 19h1.75M20.9 21h2.75M24.9 23h2.75M28.9 25h3.75M31.9 27h4.75M32.9 31h2.75M36.9 33h4.75M90.9 33h4.75M36.9 35h5.75M90.9 35h16.75M39.9 37h2.75M40.9 39h5.75M95.9 39h5.75M39.9 41h7.75M44.9 43h5.75M66.9 45h5.75M39.9 47h10.75M37.9 49h5.75M35.9 51h5.75M40.9 53h4.75M82.9 53h4.75M35.9 55h8.75M33.9 57h2.75M32.9 63h2.75M36.9 65h4.75M88.9 65h4.75M36.9 67h5.75M90.9 67h16.75M39.9 69h2.75M40.9 71h5.75M93.9 71h5.75M39.9 73h7.75M44.9 75h5.75M82.9 77h5.75M39.9 79h10.75M37.9 81h5.75M35.9 83h5.75M40.9 85h4.75M82.9 85h4.75M35.9 87h8.75M33.9 89h2.75M32.9 95h2.75M36.9 97h4.75M97.9 97h4.75M36.9 99h4.75M74.9 99h18.75M105.9 99h2.85M35.9 103h5.75M40.9 105h4.75M82.9 105h4.75M35.9 107h8.75M33.9 109h2.75M32.9 115h2.75M36.9 117h4.75M101.9 117h4.75M36.9 119h4.75M74.9 119h20.75M107.9 119h0.85M35.9 123h5.75M40.9 125h4.75M82.9 125h4.75M35.9 127h8.75M33.9 129h2.75M32.9 135h5.75M85.9 135h5.75M32.9 137h0.75M100.9 137h0.75M29.9 139h3.75M25.9 141h2.75M21.9 143h2.75M17.9 145h2.75M13.9 147h2.75M7.9 149h10.75M7.9 153h7.75M7.9 157h10.75"/><path stroke="#e8c840" d="M15.9 1h0.75M35.9 1h0.75M15.9 5h0.75M21.9 5h0.75M15.9 13h0.75M25.9 13h0.75M86.9 19h1.75M96.9 19h1.75M42.9 37h0.75M47.9 37h0.75M48.9 41h0.75M64.9 41h0.75M75.9 43h1.75M81.9 43h0.75M91.9 43h0.75M47.9 45h1.75M62.9 45h1.75M41.9 51h0.75M51.9 51h0.75M66.9 53h1.75M78.9 53h1.75M42.9 69h0.75M47.9 69h0.75M48.9 73h0.75M64.9 73h0.75M75.9 75h1.75M81.9 75h0.75M91.9 75h0.75M43.9 77h1.75M58.9 77h1.75M63.9 77h1.75M78.9 77h1.75M41.9 83h0.75M51.9 83h0.75M66.9 85h1.75M78.9 85h1.75M41.9 103h0.75M53.9 103h0.75M66.9 105h1.75M78.9 105h1.75M41.9 123h0.75M55.9 123h0.75M66.9 125h1.75M78.9 125h1.75M15.9 153h0.75M20.9 153h0.75"/><path stroke="#ce9178" d="M16.9 1h18.75M16.9 5h4.75M16.9 13h8.75M22.9 15h5.75M26.9 17h10.75M29.9 19h10.75M41.9 19h4.75M30.9 21h5.75M34.9 23h10.75M40.9 25h2.75M64.9 25h2.75M75.9 25h5.75M90.9 25h17.85M42.9 31h5.75M46.9 33h8.75M62.9 33h11.75M48.9 35h8.75M61.9 35h8.75M77.9 35h11.75M108.9 35h-0.15M53.9 39h1.75M57.9 43h2.75M61.9 43h8.75M71.9 43h2.75M82.9 43h8.75M108.9 43h-0.15M42.9 51h8.75M52.9 53h12.75M42.9 63h5.75M46.9 65h8.75M62.9 65h11.75M48.9 67h8.75M61.9 67h8.75M77.9 67h11.75M108.9 67h-0.15M53.9 71h1.75M57.9 75h2.75M61.9 75h8.75M71.9 75h2.75M82.9 75h8.75M108.9 75h-0.15M42.9 83h8.75M52.9 85h12.75M42.9 95h5.75M46.9 97h10.75M64.9 97h11.75M47.9 99h5.75M60.9 99h12.75M94.9 99h9.75M44.9 101h10.75M59.9 101h10.75M77.9 101h2.75M98.9 101h2.75M42.9 103h10.75M52.9 105h12.75M42.9 115h5.75M46.9 117h12.75M66.9 117h11.75M47.9 119h5.75M60.9 119h12.75M96.9 119h9.75M44.9 121h12.75M61.9 121h12.75M81.9 121h2.75M104.9 121h2.75M42.9 123h12.75M52.9 125h12.75M44.9 135h7.75M59.9 135h3.75M64.9 135h11.75M39.9 137h2.75M63.9 137h2.75M73.9 137h3.75M78.9 137h11.75M16.9 153h3.75"/><path stroke="#6a9955" d="M11.9 7h3.75M16.9 7h2.75M20.9 7h7.75M29.9 7h3.75M31.9 29h3.75M36.9 29h3.75M41.9 29h7.75M50.9 29h3.75M31.9 61h3.75M36.9 61h3.75M41.9 61h5.75M48.9 61h3.75M31.9 93h3.75M36.9 93h6.75M44.9 93h9.75M55.9 93h3.75M31.9 113h3.75M36.9 113h6.75M44.9 113h11.75M57.9 113h3.75M31.9 133h3.75M36.9 133h5.75M43.9 133h3.75M11.9 155h3.75M16.9 155h1.75M19.9 155h7.75M28.9 155h3.75"/><path stroke="#808080" d="M11.9 15h0.75M28.9 15h0.75M15.9 17h0.75M37.9 17h0.75M19.9 19h0.75M46.9 19h0.75M98.9 19h1.75M102.9 19h0.75M19.9 21h0.75M36.9 21h0.75M23.9 23h0.75M45.9 23h0.75M27.9 25h0.75M31.9 31h0.75M48.9 31h0.75M35.9 33h0.75M74.9 33h0.75M88.9 33h1.75M95.9 33h0.75M35.9 35h0.75M39.9 39h0.75M73.9 39h0.75M93.9 39h1.75M101.9 39h0.75M43.9 43h0.75M64.9 45h1.75M72.9 45h0.75M35.9 49h1.75M43.9 49h0.75M39.9 53h0.75M65.9 53h0.75M80.9 53h1.75M87.9 53h0.75M31.9 57h1.75M36.9 57h0.75M31.9 63h0.75M48.9 63h0.75M35.9 65h0.75M74.9 65h0.75M86.9 65h1.75M93.9 65h0.75M35.9 67h0.75M39.9 71h0.75M73.9 71h0.75M91.9 71h1.75M99.9 71h0.75M43.9 75h0.75M80.9 77h1.75M88.9 77h0.75M35.9 81h1.75M43.9 81h0.75M39.9 85h0.75M65.9 85h0.75M80.9 85h1.75M87.9 85h0.75M31.9 89h1.75M36.9 89h0.75M31.9 95h0.75M48.9 95h0.75M35.9 97h0.75M76.9 97h0.75M95.9 97h1.75M102.9 97h0.75M35.9 99h0.75M101.9 101h0.75M39.9 105h0.75M65.9 105h0.75M80.9 105h1.75M87.9 105h0.75M31.9 109h1.75M36.9 109h0.75M31.9 115h0.75M48.9 115h0.75M35.9 117h0.75M78.9 117h0.75M99.9 117h1.75M106.9 117h0.75M35.9 119h0.75M107.9 121h0.75M39.9 125h0.75M65.9 125h0.75M80.9 125h1.75M87.9 125h0.75M31.9 129h1.75M36.9 129h0.75M31.9 135h0.75M76.9 135h0.75M83.9 135h1.75M91.9 135h0.75M31.9 137h0.75M90.9 137h0.75M98.9 137h1.75M101.9 137h0.75M27.9 139h1.75M33.9 139h0.75M23.9 141h1.75M28.9 141h0.75M19.9 143h1.75M24.9 143h0.75M15.9 145h1.75M20.9 145h0.75M11.9 147h1.75M16.9 147h0.75"/><path stroke="#9cdcfe" d="M16.9 15h5.75M20.9 17h5.75M23.9 19h5.75M89.9 19h5.75M24.9 21h5.75M28.9 23h5.75M33.9 25h6.75M68.9 25h6.75M82.9 25h7.75M36.9 31h5.75M42.9 33h3.75M56.9 33h5.75M43.9 35h4.75M58.9 35h2.75M71.9 35h5.75M47.9 39h5.75M49.9 41h5.75M59.9 41h4.75M51.9 43h5.75M96.9 43h8.75M50.9 45h10.75M46.9 53h5.75M69.9 53h7.75M36.9 63h5.75M42.9 65h3.75M56.9 65h5.75M43.9 67h4.75M58.9 67h2.75M71.9 67h5.75M47.9 71h5.75M49.9 73h5.75M59.9 73h4.75M51.9 75h5.75M96.9 75h8.75M46.9 77h10.75M66.9 77h10.75M46.9 85h5.75M69.9 85h7.75M36.9 95h5.75M42.9 97h3.75M58.9 97h5.75M42.9 99h4.75M54.9 99h5.75M39.9 101h4.75M56.9 101h2.75M71.9 101h5.75M46.9 105h5.75M69.9 105h7.75M36.9 115h5.75M42.9 117h3.75M60.9 117h5.75M42.9 119h4.75M54.9 119h5.75M39.9 121h4.75M58.9 121h2.75M75.9 121h5.75M46.9 125h5.75M69.9 125h7.75M39.9 135h4.75M53.9 135h5.75M34.9 137h4.75M67.9 137h5.75"/><path stroke="#c8c8c8" d="M21.9 15h0.75M25.9 17h0.75M28.9 19h0.75M47.9 19h3.75M52.9 19h5.75M59.9 19h3.75M64.9 19h9.75M75.9 19h5.75M82.9 19h2.75M29.9 21h0.75M33.9 23h0.75M39.9 25h0.75M74.9 25h0.75M89.9 25h0.75M41.9 31h0.75M45.9 33h0.75M61.9 33h0.75M75.9 33h3.75M80.9 33h7.75M47.9 35h0.75M60.9 35h0.75M76.9 35h0.75M43.9 37h3.75M52.9 39h0.75M56.9 39h7.75M65.9 39h7.75M74.9 39h4.75M80.9 39h3.75M85.9 39h7.75M56.9 41h1.75M56.9 43h0.75M78.9 43h2.75M93.9 43h1.75M106.9 43h0.75M51.9 53h0.75M41.9 63h0.75M45.9 65h0.75M61.9 65h0.75M75.9 65h3.75M80.9 65h5.75M47.9 67h0.75M60.9 67h0.75M76.9 67h0.75M43.9 69h3.75M52.9 71h0.75M56.9 71h7.75M65.9 71h7.75M74.9 71h4.75M80.9 71h3.75M85.9 71h5.75M56.9 73h1.75M56.9 75h0.75M78.9 75h2.75M93.9 75h1.75M106.9 75h0.75M61.9 77h0.75M51.9 85h0.75M41.9 95h0.75M45.9 97h0.75M63.9 97h0.75M77.9 97h6.75M85.9 97h9.75M46.9 99h0.75M59.9 99h0.75M43.9 101h0.75M58.9 101h0.75M76.9 101h0.75M51.9 105h0.75M41.9 115h0.75M45.9 117h0.75M65.9 117h0.75M79.9 117h6.75M87.9 117h11.75M46.9 119h0.75M59.9 119h0.75M43.9 121h0.75M60.9 121h0.75M80.9 121h0.75M51.9 125h0.75M43.9 135h0.75M58.9 135h0.75M77.9 135h5.75M38.9 137h0.75M72.9 137h0.75M91.9 137h6.75"/><path stroke="#dcdcaa" d="M44.9 25h18.75M81.9 101h15.75M85.9 121h17.75M43.9 137h18.75"/></svg>
<div id="status"><div id="remote"><svg class="abs" style="left:11px;top:3px" width="13" height="14" viewBox="0 0 13 14" fill="none" ><path d="M1.7 4.5 L6 8.7 L1.7 12.9 M10.7 0.9 L6.4 5.1 L10.7 9.3" stroke="#fff" stroke-width="1.3" stroke-linecap="round" stroke-linejoin="round"/></svg></div><svg class="abs" style="left:42px;top:3.4px" width="14" height="14" viewBox="0 0 14 14" fill="none" ><circle cx="7" cy="7" r="5.65" stroke="#ccc" stroke-width="1.15"/><path d="M4.6 4.6 L9.4 9.4 M9.4 4.6 L4.6 9.4" stroke="#ccc" stroke-width="1.1" stroke-linecap="round"/></svg><span class="fit" id="f46" style="left:58.92px;transform:scaleX(1.0935);">0</span><svg class="abs" style="left:69px;top:3.5px" width="15" height="13" viewBox="0 0 15 13" fill="none" ><path d="M7.3 1.2 L13.4 11.4 H1.2 Z" stroke="#ccc" stroke-width="1.1" stroke-linejoin="round"/><path d="M7.3 4.8 V8 M7.3 9.4 V10.2" stroke="#ccc" stroke-width="1.1"/></svg><span class="fit" id="f47" style="left:86.94px;transform:scaleX(0.9743);">0</span><svg class="abs" style="left:111px;top:3px" width="11" height="14" viewBox="0 0 11 14" fill="none" ><path d="M4.5 1.4 H8.6 L6.7 5.1 L9 6.2 L2.3 12.7 L3.9 8.6 L1.5 7.4 Z" stroke="#ccc" stroke-width="1.15" stroke-linejoin="round"/></svg><span class="fit" id="f48" style="left:871.75px;transform:scaleX(0.9417);">Ln 1, Col 1</span><span class="fit" id="f49" style="left:942.56px;transform:scaleX(0.9115);">Spaces: 4</span><span class="fit" id="f50" style="left:1007.48px;letter-spacing:-0.534px;">UTF-8</span><span class="fit" id="f51" style="left:1055.66px;transform:scaleX(0.8149);">CRLF</span><span class="fit" id="f52" style="left:1118.07px;transform:scaleX(0.9172);">Blade</span><span class="fit" id="f53" style="left:1210.45px;transform:scaleX(0.9531);">Go Live</span><span class="fit" id="f54" style="left:1282.12px;letter-spacing:0.053px;">Prettier</span><svg class="abs" style="left:1097.4px;top:3px" width="14" height="14" viewBox="0 0 14 14" fill="none" ><path d="M5.4 2.6 C4.1 2.6 4 3.4 4 4.4 C4 6 3.9 7.1 3.1 7.5 C3.9 7.9 4 9 4 10.6 C4 11.6 4.1 12.4 5.4 12.4 M8.4 2.6 C9.7 2.6 9.8 3.4 9.8 4.4 C9.8 6 9.9 7.1 10.7 7.5 C9.9 7.9 9.8 9 9.8 10.6 C9.8 11.6 9.7 12.4 8.4 12.4" stroke="#ccc" stroke-width="1.4" stroke-linecap="round"/></svg><svg class="abs" style="left:1162.4px;top:3.4px" width="15" height="13.2" viewBox="0 0 16 14" fill="none" ><path fill="#ccc" fill-rule="evenodd" d="M3.2 1 H6.4 Q7.6 1 8 2 Q8.4 1 9.6 1 H12.8 Q14.2 1 14.2 2.6 V4.6 Q15.6 6 15.6 7.6 V9.4 Q15.6 10.6 14.4 11.2 Q11.6 12.8 8 12.8 Q4.4 12.8 1.6 11.2 Q0.4 10.6 0.4 9.4 V7.6 Q0.4 6 1.8 4.6 V2.6 Q1.8 1 3.2 1 Z M3.6 2.4 Q3.2 2.4 3.2 3 V4.4 Q3.2 5 3.8 5 H6 Q6.8 5 6.8 4.2 V3 Q6.8 2.4 6.2 2.4 Z M9.8 2.4 Q9.2 2.4 9.2 3 V4.2 Q9.2 5 10 5 H12.2 Q12.8 5 12.8 4.4 V3 Q12.8 2.4 12.4 2.4 Z M3.4 6.6 V10.2 Q5.4 11.2 8 11.2 Q10.6 11.2 12.6 10.2 V6.6 Q10.4 7.2 8 6.4 Q5.6 7.2 3.4 6.6 Z"/><path d="M6.2 7.6 V9.6 M9.8 7.6 V9.6" stroke="#ccc" stroke-width="1.3" stroke-linecap="round"/></svg><svg class="abs" style="left:1194px;top:3.5px" width="12.04" height="12.9" viewBox="0 0 14 15" fill="none" ><circle cx="6.9" cy="6.4" r="1.35" fill="#ccc"/><path d="M6.9 7.4 V13.4" stroke="#ccc" stroke-width="1.7" stroke-linecap="round"/><path d="M5 9 C3.4 7.8 3.4 5 5 3.8 C6.1 3 7.7 3 8.8 3.8 C10.4 5 10.4 7.8 8.8 9" stroke="#ccc" stroke-width="1"/><path d="M3.6 11 C1 9 1 4 3.6 2 C5.5 0.6 8.3 0.6 10.2 2 C12.8 4 12.8 9 10.2 11" stroke="#ccc" stroke-width="1.05"/></svg><svg class="abs" style="left:1265px;top:3.3px" width="14" height="14" viewBox="0 0 14 14" fill="none" ><circle cx="7" cy="7" r="5.65" stroke="#ccc" stroke-width="1.15"/><path d="M3.1 10.9 L10.9 3.1" stroke="#ccc" stroke-width="1.1"/></svg><svg class="abs" style="left:1337px;top:2.8px" width="14" height="14" viewBox="0 0 14 14" fill="none" ><path d="M1.8 10.4 C3 9.6 3.3 8.4 3.3 5.6 C3.3 2.8 4.9 1.4 7 1.4 C9.1 1.4 10.7 2.8 10.7 5.6 C10.7 8.4 11 9.6 12.2 10.4 Z" stroke="#ccc" stroke-width="1.1" stroke-linejoin="round"/><path d="M5.6 11 C5.8 12.6 8.2 12.6 8.4 11" stroke="#ccc" stroke-width="1.1"/></svg></div>
<div class="abs" style="left:0;top:766px;width:1366px;height:2px;background:#000"></div>
</div>
</body></html>
